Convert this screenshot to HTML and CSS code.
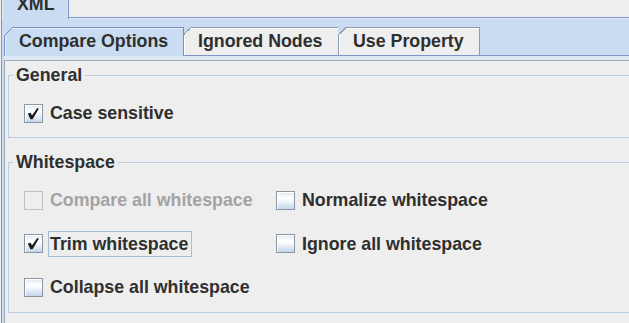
FILE: index.html
```html
<!DOCTYPE html>
<html lang="en">
<head>
  <meta charset="UTF-8" />
  <title>XML Compare Options</title>
  <link rel="stylesheet" href="styles.css">
</head>
<body>
  <div class="window">
    <div class="outer-strip">
      <div class="outer-tab"><span>XML</span></div>
    </div>

    <div class="outer-body">
      <div class="inner-strip">
        <div class="tab selected">Compare Options</div>
        <div class="tab nodes">Ignored Nodes</div>
        <div class="tab prop">Use Property</div>
      </div>

      <div class="inner-body">
        <div class="panel">
          <fieldset class="group">
            <legend>General</legend>
            <div class="options">
              <label class="option">
                <span class="box">
                  <svg width="17" height="17" viewBox="0 0 17 17"><polygon points="2.8,8.6 5.6,7.8 7,10.6 12.2,3 13.8,3.8 7.6,14.2 5.4,14.2" /></svg>
                </span>
                <span class="text">Case sensitive</span>
              </label>
            </div>
          </fieldset>

          <fieldset class="group spaced">
            <legend>Whitespace</legend>
            <div class="options grid">
              <label class="option disabled">
                <span class="box"></span>
                <span class="text">Compare all whitespace</span>
              </label>
              <label class="option">
                <span class="box"></span>
                <span class="text">Normalize whitespace</span>
              </label>
              <label class="option">
                <span class="box">
                  <svg width="17" height="17" viewBox="0 0 17 17"><polygon points="2.8,8.6 5.6,7.8 7,10.6 12.2,3 13.8,3.8 7.6,14.2 5.4,14.2" /></svg>
                </span>
                <span class="text focus">Trim whitespace</span>
              </label>
              <label class="option">
                <span class="box"></span>
                <span class="text">Ignore all whitespace</span>
              </label>
              <label class="option">
                <span class="box"></span>
                <span class="text">Collapse all whitespace</span>
              </label>
            </div>
          </fieldset>
        </div>
      </div>
    </div>
  </div>
</body>
</html>
```

FILE: styles.css
```css
* {
  box-sizing: border-box;
}

html, body {
  margin: 0;
  overflow: hidden;
}

body {
  background-color: #eeeeee;
  font-family: "Liberation Sans", Arial, sans-serif;
  font-weight: bold;
  font-size: 17.8px;
  color: #2f2f2f;
}

.window {
  width: 760px;
}

/* outer tabbed pane */
.outer-strip {
  display: flex;
  height: 17px;
  padding-left: 1px;
}

.outer-tab {
  position: relative;
  z-index: 1;
  width: 68px;
  height: 19px;
  padding-left: 15px;
  background: #c9dcf1;
  border-left: 1px solid #8197cb;
  border-right: 1px solid #8197cb;
  box-shadow: inset 1px 0 0 #e6eef8;
}

.outer-tab span {
  display: block;
  margin-top: -6px;
  line-height: 20px;
}

.outer-body {
  margin-left: 1px;
  padding: 1px 0 0 2px;
  background: #c9dcf1;
  border-top: 1px solid #8197cb;
  border-left: 1px solid #8197cb;
  box-shadow: inset 0 1px 0 #e3ecf7;
}

/* inner tabbed pane */
.inner-strip {
  display: flex;
  align-items: flex-start;
  height: 36px;
  padding-top: 8px;
}

.tab {
  position: relative;
  height: 28px;
  margin-left: -1px;
  padding: 3px 0 0 14px;
  line-height: 20px;
  background: #eeeeee;
  border: 1px solid #8c9ab0;
  border-bottom: none;
  box-shadow: inset 1px 1px 0 #ffffff;
}

.tab::before {
  content: "";
  position: absolute;
  top: -1px;
  left: -1px;
  width: 9px;
  height: 9px;
  background: linear-gradient(135deg, #c9dcf1 0 calc(50% - 1px), #8c9ab0 calc(50% - 1px) 50%, transparent 50%);
}

.tab.selected {
  z-index: 1;
  width: 180px;
  height: 29px;
  margin-left: 0;
  background: #c9dcf1;
  border-color: #7b90c2;
  box-shadow: inset 1px 1px 0 #e4edf8;
}

.tab.selected::before {
  width: 10px;
  height: 10px;
  background: linear-gradient(135deg, #c9dcf1 0 calc(50% - 1px), #7b90c2 calc(50% - 1px) 50%, transparent 50%);
}

.tab.nodes {
  width: 156px;
}

.tab.prop {
  width: 142px;
}

.inner-body {
  padding-top: 4px;
  background: linear-gradient(#dfe9f5, #c9dcf1);
  border-top: 1px solid #8195c9;
}

.panel {
  padding: 4px 0 0 3px;
  height: 300px;
  background: #eeeeee;
  border-top: 1px solid #a5acb4;
  border-left: 1px solid #9aa5b5;
}

/* titled borders */
.group {
  margin: 0;
  padding: 0 0 0 4px;
  min-inline-size: 0;
  border: 1px solid #b8cde4;
}

.group.spaced {
  margin-top: 14px;
}

.group legend {
  padding: 0 3px;
  line-height: 20px;
}

.options {
  padding: 15px 0 11px 11px;
}

.options.grid {
  display: grid;
  grid-template-columns: 252px auto;
  justify-content: start;
  row-gap: 17.5px;
  padding-bottom: 12px;
}

/* check boxes */
.option {
  display: flex;
  align-items: center;
  gap: 5px;
  height: 26px;
}

.box {
  display: flex;
  align-items: center;
  justify-content: center;
  width: 19px;
  height: 19px;
  border: 1px solid #8a96a3;
  background: linear-gradient(#dfe8f3 0%, #ffffff 35%, #f2f6fb 55%, #c3d5ea 100%);
  box-shadow: inset 1px 1px 0 #ffffff;
}

.box svg {
  fill: #1a1a1a;
}

.text {
  padding: 1px 3px 1px 1px;
  line-height: 22px;
  border: 1px solid transparent;
  white-space: nowrap;
}

.text.focus {
  border-color: #a7bdd6;
}

.option.disabled .box {
  background: #eeeeee;
  border-color: #b9c0c7;
  box-shadow: none;
}

.option.disabled .text {
  color: #a3a3a3;
}
```
